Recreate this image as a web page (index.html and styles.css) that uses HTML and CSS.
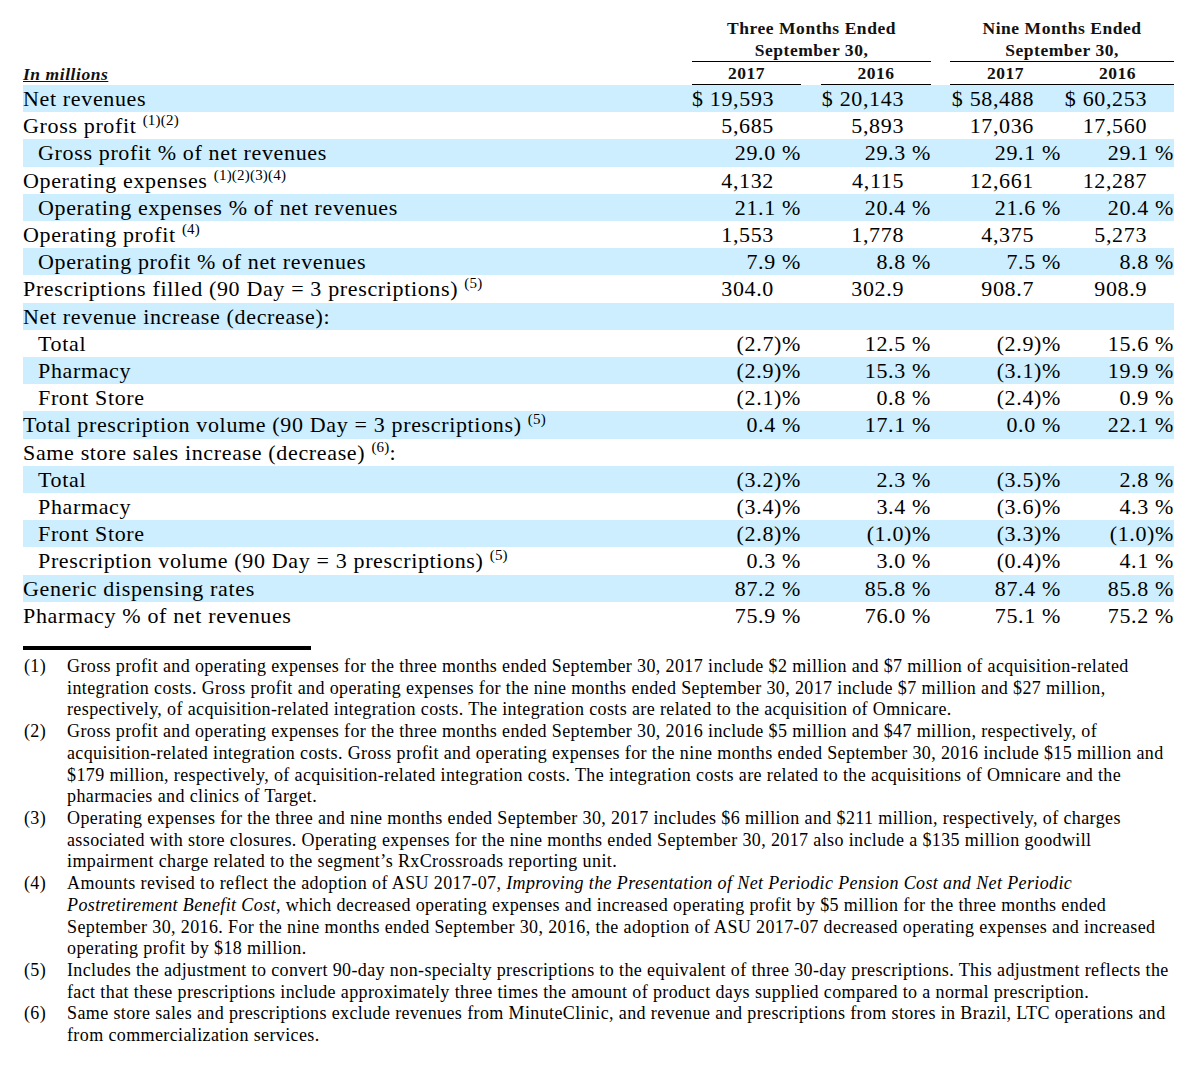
FILE: index.html
```html
<!DOCTYPE html>
<html lang="en">
<head>
<meta charset="utf-8">
<title>Retail/LTC Segment</title>
<link rel="stylesheet" href="styles.css">
</head>
<body>
<div class="page">
  <table class="fin">
    <colgroup>
      <col class="c-label"><col class="c-1"><col class="c-gap1"><col class="c-2"><col class="c-gap2"><col class="c-3"><col class="c-4">
    </colgroup>
    <thead>
      <tr class="hd1">
        <th></th>
        <th colspan="3" class="grp">Three Months Ended<br>September 30,</th>
        <th></th>
        <th colspan="2" class="grp">Nine Months Ended<br>September 30,</th>
      </tr>
      <tr class="hd2">
        <th class="unit">In millions</th>
        <th class="yr">2017</th>
        <th></th>
        <th class="yr">2016</th>
        <th></th>
        <th class="yr">2017</th>
        <th class="yr">2016</th>
      </tr>
    </thead>
    <tbody>
      <tr class="alt"><td>Net revenues</td><td class="num int">$ 19,593</td><td></td><td class="num int">$ 20,143</td><td></td><td class="num int">$ 58,488</td><td class="num int">$ 60,253</td></tr>
      <tr><td>Gross profit <sup>(1)(2)</sup></td><td class="num int">5,685</td><td></td><td class="num int">5,893</td><td></td><td class="num int">17,036</td><td class="num int">17,560</td></tr>
      <tr class="alt"><td class="ind">Gross profit % of net revenues</td><td class="num">29.0 %</td><td></td><td class="num">29.3 %</td><td></td><td class="num">29.1 %</td><td class="num">29.1 %</td></tr>
      <tr><td>Operating expenses <sup>(1)(2)(3)(4)</sup></td><td class="num int">4,132</td><td></td><td class="num int">4,115</td><td></td><td class="num int">12,661</td><td class="num int">12,287</td></tr>
      <tr class="alt"><td class="ind">Operating expenses % of net revenues</td><td class="num">21.1 %</td><td></td><td class="num">20.4 %</td><td></td><td class="num">21.6 %</td><td class="num">20.4 %</td></tr>
      <tr><td>Operating profit <sup>(4)</sup></td><td class="num int">1,553</td><td></td><td class="num int">1,778</td><td></td><td class="num int">4,375</td><td class="num int">5,273</td></tr>
      <tr class="alt"><td class="ind">Operating profit % of net revenues</td><td class="num">7.9 %</td><td></td><td class="num">8.8 %</td><td></td><td class="num">7.5 %</td><td class="num">8.8 %</td></tr>
      <tr><td>Prescriptions filled (90 Day = 3 prescriptions) <sup>(5)</sup></td><td class="num int">304.0</td><td></td><td class="num int">302.9</td><td></td><td class="num int">908.7</td><td class="num int">908.9</td></tr>
      <tr class="alt"><td>Net revenue increase (decrease):</td><td></td><td></td><td></td><td></td><td></td><td></td></tr>
      <tr><td class="ind">Total</td><td class="num">(2.7)%</td><td></td><td class="num">12.5 %</td><td></td><td class="num">(2.9)%</td><td class="num">15.6 %</td></tr>
      <tr class="alt"><td class="ind">Pharmacy</td><td class="num">(2.9)%</td><td></td><td class="num">15.3 %</td><td></td><td class="num">(3.1)%</td><td class="num">19.9 %</td></tr>
      <tr><td class="ind">Front Store</td><td class="num">(2.1)%</td><td></td><td class="num">0.8 %</td><td></td><td class="num">(2.4)%</td><td class="num">0.9 %</td></tr>
      <tr class="alt"><td>Total prescription volume (90 Day = 3 prescriptions) <sup>(5)</sup></td><td class="num">0.4 %</td><td></td><td class="num">17.1 %</td><td></td><td class="num">0.0 %</td><td class="num">22.1 %</td></tr>
      <tr><td>Same store sales increase (decrease) <sup>(6)</sup>:</td><td></td><td></td><td></td><td></td><td></td><td></td></tr>
      <tr class="alt"><td class="ind">Total</td><td class="num">(3.2)%</td><td></td><td class="num">2.3 %</td><td></td><td class="num">(3.5)%</td><td class="num">2.8 %</td></tr>
      <tr><td class="ind">Pharmacy</td><td class="num">(3.4)%</td><td></td><td class="num">3.4 %</td><td></td><td class="num">(3.6)%</td><td class="num">4.3 %</td></tr>
      <tr class="alt"><td class="ind">Front Store</td><td class="num">(2.8)%</td><td></td><td class="num">(1.0)%</td><td></td><td class="num">(3.3)%</td><td class="num">(1.0)%</td></tr>
      <tr><td class="ind">Prescription volume (90 Day = 3 prescriptions) <sup>(5)</sup></td><td class="num">0.3 %</td><td></td><td class="num">3.0 %</td><td></td><td class="num">(0.4)%</td><td class="num">4.1 %</td></tr>
      <tr class="alt"><td>Generic dispensing rates</td><td class="num">87.2 %</td><td></td><td class="num">85.8 %</td><td></td><td class="num">87.4 %</td><td class="num">85.8 %</td></tr>
      <tr><td>Pharmacy % of net revenues</td><td class="num">75.9 %</td><td></td><td class="num">76.0 %</td><td></td><td class="num">75.1 %</td><td class="num">75.2 %</td></tr>
    </tbody>
  </table>

  <div class="rule"></div>

  <div class="notes">
    <div class="note">
      <span class="note-num">(1)</span>
      <span class="note-text">Gross profit and operating expenses for the three months ended September 30, 2017 include $2 million and $7 million of acquisition-related<br>integration costs. Gross profit and operating expenses for the nine months ended September 30, 2017 include $7 million and $27 million,<br>respectively, of acquisition-related integration costs. The integration costs are related to the acquisition of Omnicare.</span>
    </div>
    <div class="note">
      <span class="note-num">(2)</span>
      <span class="note-text">Gross profit and operating expenses for the three months ended September 30, 2016 include $5 million and $47 million, respectively, of<br>acquisition-related integration costs. Gross profit and operating expenses for the nine months ended September 30, 2016 include $15 million and<br>$179 million, respectively, of acquisition-related integration costs. The integration costs are related to the acquisitions of Omnicare and the<br>pharmacies and clinics of Target.</span>
    </div>
    <div class="note">
      <span class="note-num">(3)</span>
      <span class="note-text">Operating expenses for the three and nine months ended September 30, 2017 includes $6 million and $211 million, respectively, of charges<br>associated with store closures. Operating expenses for the nine months ended September 30, 2017 also include a $135 million goodwill<br>impairment charge related to the segment’s RxCrossroads reporting unit.</span>
    </div>
    <div class="note">
      <span class="note-num">(4)</span>
      <span class="note-text">Amounts revised to reflect the adoption of ASU 2017-07, <i>Improving the Presentation of Net Periodic Pension Cost and Net Periodic</i><br><i>Postretirement Benefit Cost</i>, which decreased operating expenses and increased operating profit by $5 million for the three months ended<br>September 30, 2016. For the nine months ended September 30, 2016, the adoption of ASU 2017-07 decreased operating expenses and increased<br>operating profit by $18 million.</span>
    </div>
    <div class="note">
      <span class="note-num">(5)</span>
      <span class="note-text">Includes the adjustment to convert 90-day non-specialty prescriptions to the equivalent of three 30-day prescriptions. This adjustment reflects the<br>fact that these prescriptions include approximately three times the amount of product days supplied compared to a normal prescription.</span>
    </div>
    <div class="note">
      <span class="note-num">(6)</span>
      <span class="note-text">Same store sales and prescriptions exclude revenues from MinuteClinic, and revenue and prescriptions from stores in Brazil, LTC operations and<br>from commercialization services.</span>
    </div>
  </div>
</div>
</body>
</html>
```

FILE: styles.css
```css
html, body {
  margin: 0;
  padding: 0;
  background: #ffffff;
}

body {
  color: #000000;
  font-family: "Liberation Serif", "Times New Roman", serif;
}

.page {
  padding: 17px 0 0 23px;
}

.fin {
  border-collapse: collapse;
  table-layout: fixed;
  width: 1151px;
}

.c-label { width: 669px; }
.c-1 { width: 109px; }
.c-gap1 { width: 20px; }
.c-2 { width: 110px; }
.c-gap2 { width: 19px; }
.c-3 { width: 111px; }
.c-4 { width: 113px; }

.fin th {
  padding: 0;
  font-size: 17.5px;
  letter-spacing: 0.55px;
  line-height: 22px;
  font-weight: bold;
  text-align: center;
  vertical-align: bottom;
  color: #111111;
}

.fin .grp {
  border-bottom: 1px solid #000000;
}

.fin .yr {
  border-bottom: 1px solid #000000;
}

.fin .unit {
  text-align: left;
  font-style: italic;
  text-decoration: underline;
}

.fin td {
  padding: 0;
  height: 27.2px;
  font-size: 22px;
  letter-spacing: 0.65px;
  line-height: 27.2px;
  white-space: nowrap;
  vertical-align: middle;
}

.fin tr.alt td {
  background: #cceeff;
}

.fin td.ind {
  padding-left: 15px;
}

.fin td.num {
  text-align: right;
}

.fin td.int {
  padding-right: 27px;
}

.fin sup {
  font-size: 15px;
  line-height: 0;
  letter-spacing: 0.2px;
  vertical-align: 8px;
}

.rule {
  width: 288px;
  height: 4px;
  margin-top: 17px;
  background: #000000;
}

.notes {
  margin-top: 6px;
  font-size: 18px;
  letter-spacing: 0.38px;
  line-height: 21.7px;
}

.note {
  display: flex;
}

.note-num {
  flex: none;
  width: 43px;
  margin-left: 1px;
}

.note-text {
  white-space: nowrap;
}
```
